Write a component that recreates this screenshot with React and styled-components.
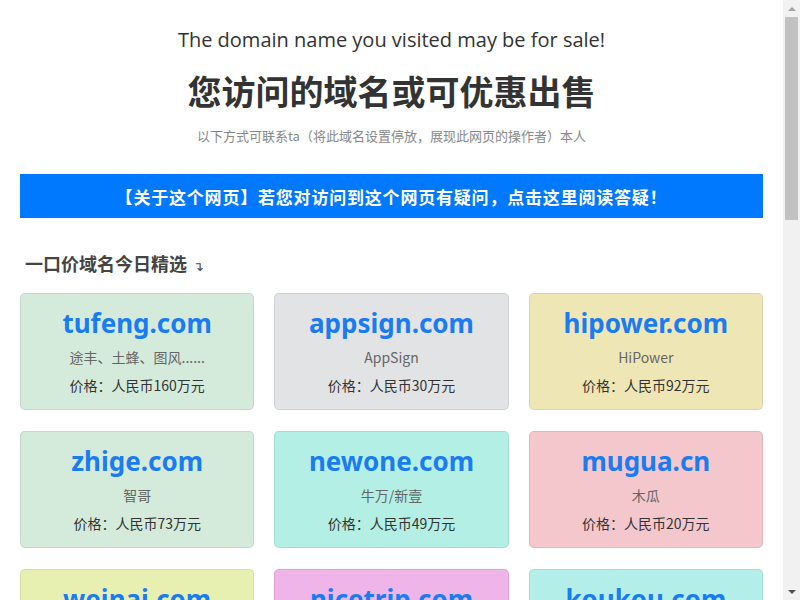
import styled, { createGlobalStyle } from "styled-components";

const Global = createGlobalStyle`
  html, body { margin: 0; padding: 0; background: #fff; overflow: hidden; }
  body {
    font-family: "Noto Sans", "Noto Sans CJK SC", sans-serif;
    color: #333;
  }
`;

const Viewport = styled.div`
  display: flex;
  height: 100vh;
  overflow: hidden;
`;

const Page = styled.main`
  flex: 1;
  min-width: 0;
  overflow: hidden;
  padding: 0 20px 40px;
`;

const Scrollbar = styled.div`
  width: 17px;
  flex-shrink: 0;
  display: flex;
  flex-direction: column;
  background: #f1f1f1;
`;

const Arrow = styled.div`
  height: 17px;
  display: flex;
  align-items: center;
  justify-content: center;
  &::before {
    content: "";
    width: 0;
    height: 0;
    border-left: 4px solid transparent;
    border-right: 4px solid transparent;
    ${(p) =>
      p.$down
        ? "border-top: 4px solid #505050;"
        : "border-bottom: 4px solid #a3a3a3;"}
  }
`;

const Track = styled.div`
  flex: 1;
  padding: 0 2px;
`;

const Thumb = styled.div`
  height: 203px;
  background: #c1c1c1;
`;

const Header = styled.header`
  text-align: center;
  padding-top: 26px;
`;

const EnTitle = styled.h2`
  margin: 0;
  font-family: "Open Sans", "Noto Sans CJK SC", sans-serif;
  font-weight: 400;
  font-size: 20px;
  line-height: 28px;
  color: #333;
`;

const CnTitle = styled.h1`
  margin: 14px 0 0;
  font-family: "Noto Sans CJK SC", sans-serif;
  font-weight: 700;
  font-size: 34px;
  line-height: 46px;
  color: #333;
`;

const Sub = styled.p`
  margin: 12px 0 0;
  font-family: "Noto Sans CJK SC", sans-serif;
  font-size: 13px;
  line-height: 20px;
  color: #888;
`;

const Notice = styled.a`
  display: flex;
  align-items: center;
  justify-content: center;
  margin-top: 28px;
  height: 44px;
  background: #0079fe;
  color: #fff;
  font-family: "Noto Sans CJK SC", sans-serif;
  font-weight: 700;
  font-size: 17px;
  letter-spacing: 0.8px;
  text-decoration: none;
`;

const Section = styled.h3`
  margin: 32px 0 0 5px;
  font-family: "Noto Sans CJK SC", sans-serif;
  font-weight: 700;
  font-size: 18px;
  line-height: 26px;
  color: #444;
  span {
    font-weight: 400;
    font-size: 13px;
    margin-left: 6px;
  }
`;

const Grid = styled.div`
  display: grid;
  grid-template-columns: repeat(3, 1fr);
  gap: 21px 20px;
  margin-top: 14px;
`;

const Card = styled.div`
  background: ${(p) => p.$bg};
  border: 1px solid rgba(0, 0, 0, 0.08);
  border-radius: 5px;
  text-align: center;
  box-sizing: border-box;
  height: 117px;
  padding-top: 12px;
`;

const Domain = styled.div`
  font-family: "Noto Sans", sans-serif;
  font-weight: 700;
  font-size: 26px;
  line-height: 34px;
  color: #1a7cf0;
`;

const Desc = styled.div`
  margin-top: 7px;
  font-family: "Noto Sans CJK SC", sans-serif;
  font-size: 14px;
  line-height: 20px;
  color: #666;
`;

const Price = styled.div`
  margin-top: 8px;
  font-family: "Noto Sans CJK SC", sans-serif;
  font-size: 14px;
  line-height: 20px;
  color: #333;
`;

const domains = [
  { name: "tufeng.com", desc: "途丰、土蜂、图风......", price: "160", bg: "#d4ebdb" },
  { name: "appsign.com", desc: "AppSign", price: "30", bg: "#e2e3e5" },
  { name: "hipower.com", desc: "HiPower", price: "92", bg: "#efe6b5" },
  { name: "zhige.com", desc: "智哥", price: "73", bg: "#d4ebdb" },
  { name: "newone.com", desc: "牛万/新壹", price: "49", bg: "#b3efe5" },
  { name: "mugua.cn", desc: "木瓜", price: "20", bg: "#f4c7cd" },
  { name: "weinai.com", desc: "维奈", price: "18", bg: "#e8f0b1" },
  { name: "nicetrip.com", desc: "NiceTrip", price: "36", bg: "#efb4e8" },
  { name: "koukou.com", desc: "扣扣", price: "58", bg: "#b3efe8" },
];

export default function App() {
  return (
    <>
      <Global />
      <Viewport>
        <Page>
          <Header>
            <EnTitle>The domain name you visited may be for sale!</EnTitle>
            <CnTitle>您访问的域名或可优惠出售</CnTitle>
            <Sub>以下方式可联系ta（将此域名设置停放，展现此网页的操作者）本人</Sub>
          </Header>
          <Notice href="#">【关于这个网页】若您对访问到这个网页有疑问，点击这里阅读答疑！</Notice>
          <Section>
            一口价域名今日精选<span>↴</span>
          </Section>
          <Grid>
            {domains.map((d) => (
              <Card key={d.name} $bg={d.bg}>
                <Domain>{d.name}</Domain>
                <Desc>{d.desc}</Desc>
                <Price>价格：人民币{d.price}万元</Price>
              </Card>
            ))}
          </Grid>
        </Page>
        <Scrollbar>
          <Arrow />
          <Track>
            <Thumb />
          </Track>
          <Arrow $down />
        </Scrollbar>
      </Viewport>
    </>
  );
}
